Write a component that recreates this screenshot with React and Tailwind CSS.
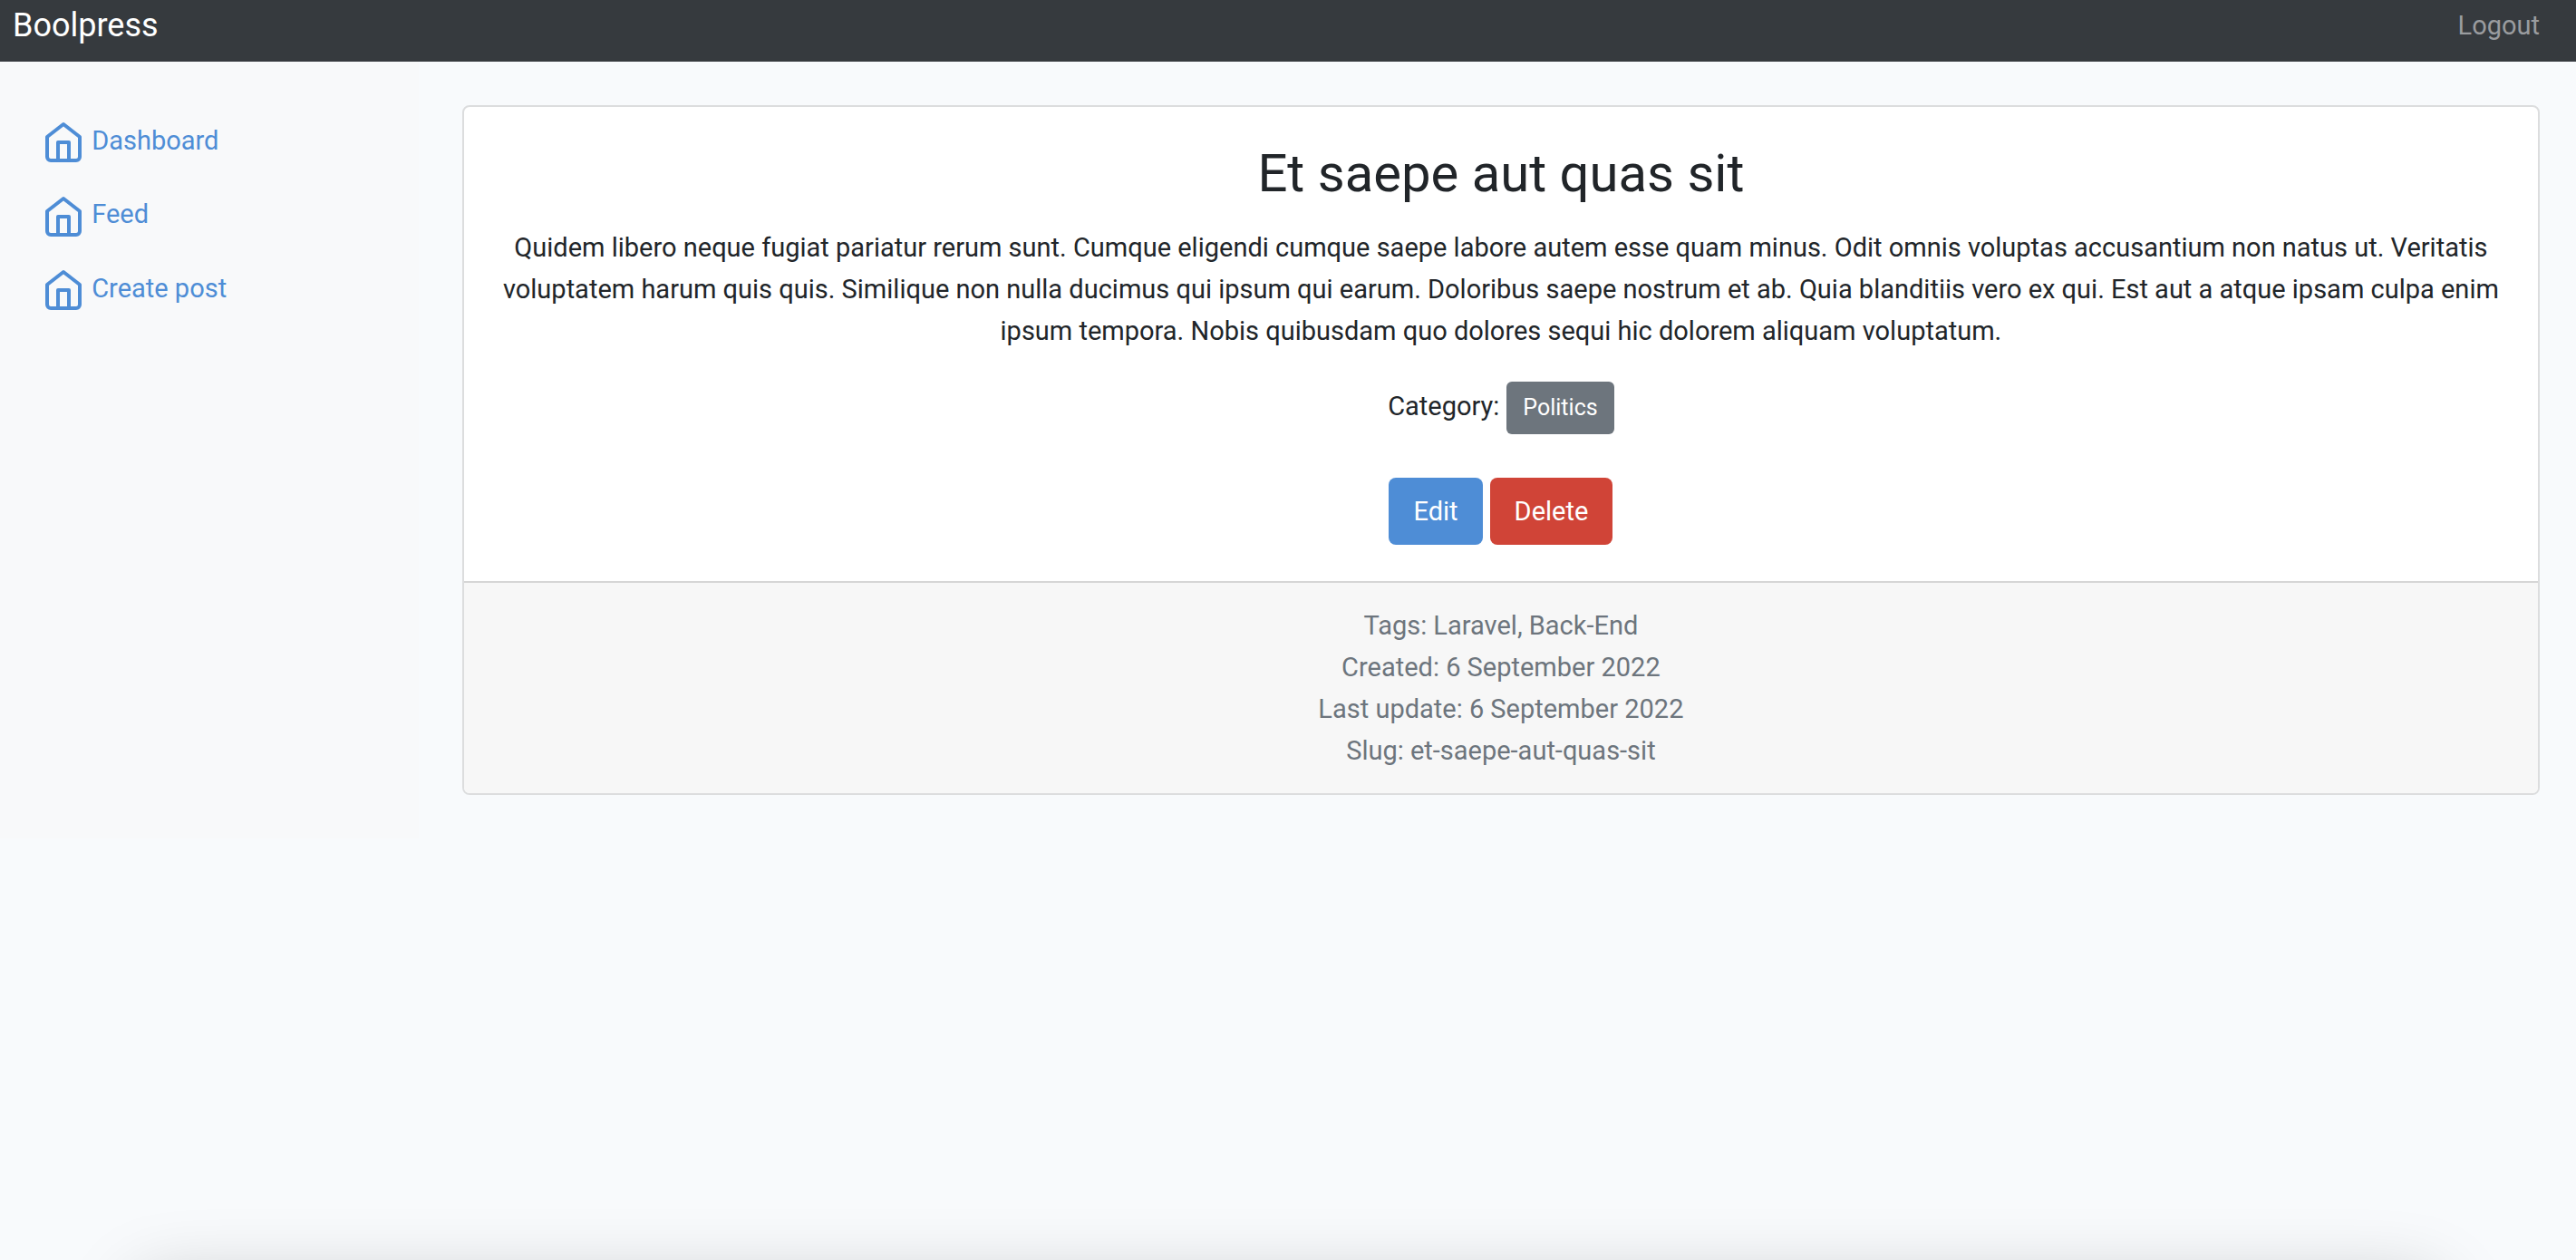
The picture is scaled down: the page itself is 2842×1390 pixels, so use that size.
const links = ["Dashboard", "Feed", "Create post"];

const details = [
  "Tags: Laravel, Back-End",
  "Created: 6 September 2022",
  "Last update: 6 September 2022",
  "Slug: et-saepe-aut-quas-sit",
];

function HomeIcon() {
  return (
    <svg
      className="inline-block size-12 align-middle"
      viewBox="0 0 24 24"
      fill="none"
      stroke="currentColor"
      strokeWidth="2"
      strokeLinecap="round"
      strokeLinejoin="round"
      aria-hidden="true"
    >
      <path d="M3 9l9-7 9 7v11a2 2 0 0 1-2 2H5a2 2 0 0 1-2-2z" />
      <polyline points="9 22 9 12 15 12 15 22" />
    </svg>
  );
}

export default function App() {
  return (
    <div className="relative min-h-screen overflow-hidden bg-[#f8fafc] font-['Roboto','Noto_Sans',sans-serif] text-[29px] leading-[46px] text-[#212529]">
      <header className="flex h-[68px] items-center justify-between bg-[#363a3e] pr-10 pb-3 pl-3.5">
        <a href="#" className="text-[36px] text-white">Boolpress</a>
        <a href="#" className="text-[#9a9c9f]">Logout</a>
      </header>

      <div className="flex">
        <nav className="w-[16.25%] shrink-0 bg-[#f8f9fa] pt-16 pl-[46px]">
          <ul className="flex flex-col gap-8">
            {links.map((label) => (
              <li key={label}>
                <a href="#" className="block text-[#4e8dd6]">
                  <HomeIcon /> {label}
                </a>
              </li>
            ))}
          </ul>
        </nav>

        <main className="min-w-0 flex-1 py-12 pr-10 pl-12">
          <article className="overflow-hidden rounded-lg border-2 border-[#dcddde] bg-white text-center">
            <div className="p-10">
              <h1 className="text-[58px] leading-[66px]">Et saepe aut quas sit</h1>
              <p className="mt-[26px]">
                Quidem libero neque fugiat pariatur rerum sunt. Cumque eligendi cumque saepe labore autem esse quam
                minus. Odit omnis voluptas accusantium non natus ut. Veritatis voluptatem harum quis quis. Similique
                non nulla ducimus qui ipsum qui earum. Doloribus saepe nostrum et ab. Quia blanditiis vero ex qui. Est
                aut a atque ipsam culpa enim ipsum tempora. Nobis quibusdam quo dolores sequi hic dolorem aliquam
                voluptatum.
              </p>
              <div className="mt-[33px] flex items-baseline justify-center gap-2">
                <span>Category:</span>
                <button type="button" className="h-[58px] rounded-md bg-[#6d757d] px-[18px] text-[25px] text-white">
                  Politics
                </button>
              </div>
              <div className="mt-12 flex justify-center gap-2">
                <button type="button" className="h-[74px] rounded-lg bg-[#4e8dd6] px-[27px] text-white">Edit</button>
                <button type="button" className="h-[74px] rounded-lg bg-[#d04437] px-[27px] text-white">Delete</button>
              </div>
            </div>
            <footer className="border-t-2 border-[#d6d6d6] bg-[#f7f7f7] py-6 text-[#6d757d]">
              {details.map((line) => (
                <p key={line}>{line}</p>
              ))}
            </footer>
          </article>
        </main>
      </div>

      {/* Soft shadow rising from the bottom edge */}
      <div className="absolute inset-x-[150px] top-full h-48 rounded-3xl shadow-[0_24px_80px_rgba(0,0,0,0.22)]" />
    </div>
  );
}
